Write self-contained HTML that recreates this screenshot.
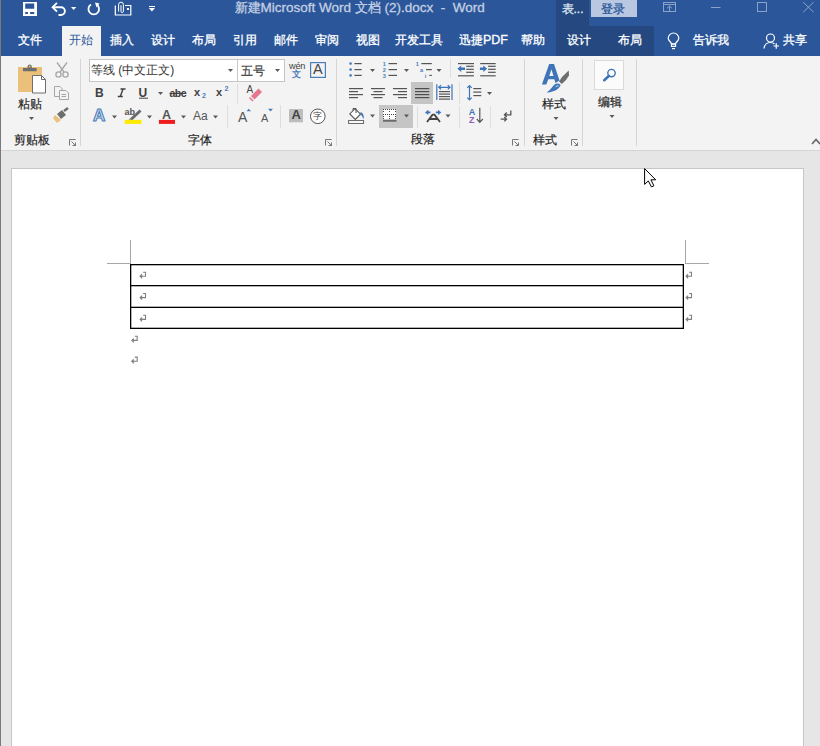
<!DOCTYPE html>
<html><head><meta charset="utf-8">
<style>
*{margin:0;padding:0;box-sizing:border-box}
html,body{width:820px;height:746px;overflow:hidden;background:#e6e6e6;font-family:"Liberation Sans",sans-serif;}
.a{position:absolute}
#title{left:0;top:0;width:820px;height:56px;background:#2b579a}
#lb{left:0;top:0;width:1px;height:746px;background:#7a7a7a;z-index:50}
.tt{color:#fff;font-size:12px;line-height:14px;white-space:nowrap;-webkit-text-stroke:0.3px currentColor}
#ribbon{left:0;top:56px;width:820px;height:94px;background:#f3f3f3}
#rbb{left:0;top:150px;width:820px;height:1px;background:#d5d5d5}
#page{left:11px;top:168px;width:793px;height:600px;background:#fff;border:1px solid #c6c6c6}
.sep{background:#d9d9d9;width:1px}
.lbl{color:#262626;font-size:12px;line-height:13px;white-space:nowrap;-webkit-text-stroke:0.2px currentColor}
.ret{color:#7f7f7f}
</style></head><body>
<div id="lb" class="a"></div>
<!-- TITLE BAR -->
<div id="title" class="a"></div>
<svg class="a" style="left:0;top:0" width="820" height="56" viewBox="0 0 820 56">
 <!-- save -->
 <path d="M23 2 H37 V16 H23 Z M25.2 3.5 V8.8 H34.2 V3.5 Z M25.2 12 V14 H27.9 V12 Z M30.1 12 V14 H34.2 V12 Z" fill="#fff" fill-rule="evenodd"/>
 <!-- undo -->
 <path d="M57 2.8 L52.6 7.2 L57 11.6" fill="none" stroke="#fff" stroke-width="1.9"/>
 <path d="M53 7.2 H61 A3.9 3.9 0 0 1 61 15 H58.5" fill="none" stroke="#fff" stroke-width="1.9"/>
 <path d="M71 7 H76.3 L73.65 9.9 Z" fill="#fff"/>
 <!-- repeat -->
 <path d="M91 4.5 A5.3 5.3 0 1 0 96.5 4.5" fill="none" stroke="#fff" stroke-width="1.8"/>
 <path d="M95 2.5 L99.5 3.5 L96.5 7.5 Z" fill="#fff"/>
 <!-- touch mode -->
 <path d="M115.3 5.5 V15 H130.8 V5.5 H125" fill="none" stroke="#fff" stroke-width="1.2"/>
 <path d="M118.6 11.5 V4.6 A2.4 2.4 0 0 1 123.4 4.6 V11.3 A1.2 1.2 0 0 1 121 11.3 V5.2" fill="none" stroke="#fff" stroke-width="1"/>
 <rect x="127" y="8" width="2" height="2" fill="#fff"/>
 <!-- customize -->
 <rect x="149" y="6" width="6" height="1" fill="#fff"/>
 <path d="M148.8 8 H155 L151.9 11.5 Z" fill="#fff"/>
 <!-- right window controls -->
 <rect x="556" y="0" width="33" height="26" fill="#24487f"/>
 <rect x="556" y="26" width="98" height="30" fill="#24487f"/>
 <rect x="591" y="0" width="46" height="17" fill="#b9c8e0"/>
 <g fill="none" stroke="#8aa3cb" stroke-width="1">
  <rect x="663.5" y="2.5" width="12" height="9"/>
  <path d="M663.5 4.5 H675.5 M667 8.3 L669.5 6 L672 8.3 M669.5 6.5 V11"/>
  <path d="M711 7.5 H720.5"/>
  <rect x="757.5" y="2.5" width="9" height="9"/>
  <path d="M803.2 2.2 L813.6 12.2 M813.6 2.2 L803.2 12.2"/>
 </g>
 <!-- lightbulb -->
 <g fill="none" stroke="#fff" stroke-width="1.2">
  <path d="M671.5 44 C671.2 42 668.2 40.6 668.2 38.3 A5.3 5.3 0 0 1 678.8 38.3 C678.8 40.6 675.8 42 675.5 44 Z"/>
  <rect x="671.5" y="44" width="4" height="2.4"/>
 </g>
 <rect x="672" y="48" width="3" height="1.2" fill="#fff"/>
 <!-- person -->
 <g fill="none" stroke="#fff" stroke-width="1.2">
  <circle cx="770.5" cy="38" r="4"/>
  <path d="M764 48.5 C764.5 44.5 767 42.5 770.5 42.5 C772 42.5 773.5 43 774.5 44"/>
  <path d="M773.5 46 H779 M776.25 43.2 V48.8"/>
 </g>
</svg>
<div class="a tt" style="left:234.5px;top:0px;color:#c3cfe3;font-size:12.5px;line-height:15px">新建<span style="font-size:13.5px">Microsoft Word </span>文档<span style="font-size:13.5px"> (2).docx &nbsp;- &nbsp;Word</span></div>
<div class="a tt" style="left:561.5px;top:1.5px;color:#dfe6f1;font-size:12px;line-height:15px">表...</div>
<div class="a tt" style="left:601px;top:1.5px;color:#2b579a;font-size:12px;line-height:15px">登录</div>
<!-- tabs -->
<div class="a" style="left:62px;top:26px;width:39px;height:30px;background:#f3f3f3"></div>
<div class="a tt" style="left:18px;top:33px">文件</div>
<div class="a tt" style="left:68.5px;top:33px;color:#2b579a;-webkit-text-stroke:0">开始</div>
<div class="a tt" style="left:110px;top:33px">插入</div>
<div class="a tt" style="left:151px;top:33px">设计</div>
<div class="a tt" style="left:191.5px;top:33px">布局</div>
<div class="a tt" style="left:232.5px;top:33px">引用</div>
<div class="a tt" style="left:274px;top:33px">邮件</div>
<div class="a tt" style="left:314.5px;top:33px">审阅</div>
<div class="a tt" style="left:355.5px;top:33px">视图</div>
<div class="a tt" style="left:395px;top:33px">开发工具</div>
<div class="a tt" style="left:459px;top:33px">迅捷<span style="font-size:12.5px">PDF</span></div>
<div class="a tt" style="left:521px;top:33px">帮助</div>
<div class="a tt" style="left:566.5px;top:33px">设计</div>
<div class="a tt" style="left:618px;top:33px">布局</div>
<div class="a tt" style="left:693px;top:33px">告诉我</div>
<div class="a tt" style="left:782.5px;top:33px">共享</div>

<!-- RIBBON -->
<div id="ribbon" class="a"></div>
<!-- combo boxes -->
<div class="a" style="left:89px;top:59px;width:149px;height:23px;background:#fff;border:1px solid #c6c6c6"></div>
<div class="a" style="left:237px;top:59px;width:48px;height:23px;background:#fff;border:1px solid #c6c6c6"></div>
<div class="a" style="left:594px;top:60px;width:30px;height:30px;background:#fbfbfb;border:1px solid #dadada"></div>
<!-- selected buttons -->
<div class="a" style="left:411px;top:82px;width:22px;height:22px;background:#c5c5c5"></div>
<div class="a" style="left:379px;top:105px;width:34px;height:23px;background:#c5c5c5"></div>
<svg class="a" style="left:0;top:56px" width="820" height="94" viewBox="0 56 820 94">
 <!-- separators -->
 <g fill="#d5d5d5">
  <rect x="80" y="59" width="1" height="87"/>
  <rect x="336" y="59" width="1" height="87"/>
  <rect x="524" y="59" width="1" height="87"/>
  <rect x="582" y="59" width="1" height="87"/>
  <rect x="636" y="59" width="1" height="87"/>
 </g>
 <g fill="#dedede">
  <rect x="237" y="84" width="1" height="20"/>
  <rect x="227" y="105" width="1" height="23"/>
  <rect x="280" y="105" width="1" height="23"/>
  <rect x="450" y="59" width="1" height="19"/>
  <rect x="459" y="82" width="1" height="22"/>
  <rect x="417" y="106" width="1" height="22"/>
  <rect x="459" y="106" width="1" height="22"/>
  <rect x="490" y="106" width="1" height="22"/>
 </g>
 <!-- dropdown arrows -->
 <g fill="#595959">
  <path d="M29 117 h5 l-2.5 3z"/>
  <path d="M158 92 h5 l-2.5 3z"/>
  <path d="M228 69 h5 l-2.5 3z"/>
  <path d="M275 69 h5 l-2.5 3z"/>
  <path d="M112 115.5 h5 l-2.5 3z"/>
  <path d="M147 115.5 h5 l-2.5 3z"/>
  <path d="M181 115.5 h5 l-2.5 3z"/>
  <path d="M213 115.5 h5 l-2.5 3z"/>
  <path d="M370 69 h5 l-2.5 3z"/>
  <path d="M404 69 h5 l-2.5 3z"/>
  <path d="M436.5 69 h5 l-2.5 3z"/>
  <path d="M487 92 h5 l-2.5 3z"/>
  <path d="M370 114.5 h5 l-2.5 3z"/>
  <path d="M404 114.5 h5 l-2.5 3z"/>
  <path d="M445.5 114.5 h5 l-2.5 3z"/>
  <path d="M553.5 117 h5 l-2.5 3z"/>
  <path d="M609.5 115 h5 l-2.5 3z"/>
 </g>
 <!-- launchers -->
 <g fill="none" stroke="#777" stroke-width="1">
  <path d="M69.5 145.5 V139.5 H75.5"/><path d="M71.5 141.5 L75.5 145.5 M75.5 142.5 V145.5 H72.5"/>
  <path d="M325.5 145.5 V139.5 H331.5"/><path d="M327.5 141.5 L331.5 145.5 M331.5 142.5 V145.5 H328.5"/>
  <path d="M512.5 145.5 V139.5 H518.5"/><path d="M514.5 141.5 L518.5 145.5 M518.5 142.5 V145.5 H515.5"/>
  <path d="M571.5 145.5 V139.5 H577.5"/><path d="M573.5 141.5 L577.5 145.5 M577.5 142.5 V145.5 H574.5"/>
 </g>
 <!-- collapse caret -->
 <path d="M812 144 L816 139.5 L820 144" fill="none" stroke="#666" stroke-width="1.6"/>

 <!-- paste -->
 <rect x="18" y="67" width="24" height="25" fill="#ebc07a"/>
 <path d="M23 71.2 V68 H27.6 V66.6 A2.1 2.1 0 0 1 31.8 66.6 V68 H36.6 V71.2 Z" fill="#6e6e6e"/><circle cx="29.7" cy="66.5" r="0.9" fill="#ebc07a"/>
 <path d="M32.5 75.5 H41.5 L45.5 79.5 V93 H32.5 Z" fill="#fff" stroke="#6e6e6e" stroke-width="1"/>
 <path d="M41.5 75.5 V79.5 H45.5" fill="none" stroke="#6e6e6e" stroke-width="1"/>
 <!-- scissors -->
 <g fill="none" stroke="#a6a6a6" stroke-width="1.3">
  <path d="M57 62.5 L64 72 M67 62.5 L60 72"/>
  <circle cx="58.5" cy="74.5" r="2.6"/><circle cx="65.5" cy="74.5" r="2.6"/>
 </g>
 <!-- copy -->
 <g fill="#f3f3f3" stroke="#a6a6a6" stroke-width="1">
  <path d="M54.5 86.5 H60 L62 88.5 V96.5 H54.5 Z"/>
  <path d="M59.5 90.5 H66 L68.5 93 V99.5 H59.5 Z"/>
 </g>
 <g stroke="#a6a6a6" stroke-width="1"><path d="M61.5 94.5 H66 M61.5 96.5 H66"/></g>
 <!-- format painter -->
 <path d="M57 114 L62 110 L66 115 L61 119 Z" fill="#6e6e6e"/>
 <path d="M64 111 L68 108" stroke="#6e6e6e" stroke-width="2.5"/>
 <path d="M55 115 L61 120 L57 123 L53 118 Z" fill="#ebc07a"/>
</svg>
<!-- FONT GROUP -->
<svg class="a" style="left:0;top:56px" width="820" height="94" viewBox="0 56 820 94">
 <path d="M120.5 89 H125.5 M123 89 L120.3 96.5 M117.8 96.5 H122.8" fill="none" stroke="#404040" stroke-width="1.4"/>
 <!-- underline bar -->
 <rect x="139" y="97.7" width="9" height="1" fill="#444"/>
 <!-- strikethrough -->
 <rect x="169.5" y="93" width="17" height="1" fill="#444"/>
 <!-- A border box -->
 <rect x="310.6" y="62.6" width="14.8" height="14.8" fill="none" stroke="#4a7ebb" stroke-width="1.2"/>
 <!-- clear formatting eraser -->
 <path d="M251 96 L258.5 88.5 L262 92 L254.5 99.5 Z" fill="#e8758f"/>
 <path d="M249.5 97.5 L253 101" stroke="#e8758f" stroke-width="1.6"/>
 <!-- highlight pen -->
 <path d="M130 118.5 L139.5 109.5 L141.5 111.5 L132 120.5 Z" fill="#6b6b6b"/>
 <path d="M128.5 120 L130 118.5 L132 120.5 L130.5 122 Z" fill="#8a8a8a"/>
 <rect x="124.7" y="119.9" width="16.8" height="4" fill="#ffea00"/>
 <!-- font color bar -->
 <rect x="158.9" y="119.9" width="16.1" height="4" fill="#ee1c1c"/>
 <!-- grow/shrink triangles -->
 <path d="M246.5 111.3 H251 L248.75 108.8 Z" fill="#4a7ebb"/>
 <path d="M268 108.8 H273 L270.5 111.5 Z" fill="#4a7ebb"/>
 <!-- shading box -->
 <rect x="289" y="109" width="14" height="13.3" fill="#bdbdbd"/>
 <!-- enclose circle -->
 <circle cx="317.8" cy="116.3" r="7.3" fill="#fff" stroke="#555" stroke-width="1"/>
 <!-- text effects A outline -->
 <text x="93" y="121.4" font-family="Liberation Sans" font-weight="bold" font-size="17" fill="#dce8f6" stroke="#4a7ebb" stroke-width="1.1">A</text>
</svg>
<div class="a" style="left:95px;top:85.5px;font:bold 12px/14px 'Liberation Sans';color:#404040">B</div>

<div class="a" style="left:138.5px;top:85.5px;font:bold 12px/14px 'Liberation Sans';color:#404040">U</div>
<div class="a" style="left:169.5px;top:86.5px;font:bold 10.5px/12px 'Liberation Sans';color:#404040;letter-spacing:-0.5px">abc</div>
<div class="a" style="left:194px;top:85px;font:bold 11px/14px 'Liberation Sans';color:#404040">x</div>
<div class="a" style="left:202px;top:92px;font:bold 7px/8px 'Liberation Sans';color:#4a7ebb">2</div>
<div class="a" style="left:216px;top:85px;font:bold 11px/14px 'Liberation Sans';color:#404040">x</div>
<div class="a" style="left:224.5px;top:85px;font:bold 7px/8px 'Liberation Sans';color:#4a7ebb">2</div>
<div class="a" style="left:246.5px;top:84px;font:10px/12px 'Liberation Sans';color:#444">A</div>
<div class="a" style="left:289px;top:61px;font:9.2px/10px 'Liberation Sans';color:#404040;letter-spacing:-0.2px">wén</div>
<div class="a" style="left:292px;top:69px;font:bold 8.5px/10px 'Liberation Sans',sans-serif;color:#4a7ebb">文</div>
<div class="a" style="left:313px;top:61px;font:14.5px/16px 'Liberation Sans';color:#444">A</div>
<div class="a" style="left:124.5px;top:107px;font:bold 9px/10px 'Liberation Sans';color:#555">ab</div>
<div class="a" style="left:162px;top:107.5px;font:bold 12.5px/14px 'Liberation Sans';color:#555">A</div>
<div class="a" style="left:193px;top:108.5px;font:12px/14px 'Liberation Sans';color:#555">Aa</div>
<div class="a" style="left:238px;top:109px;font:14px/16px 'Liberation Sans';color:#555">A</div>
<div class="a" style="left:261px;top:112px;font:11px/13px 'Liberation Sans';color:#555">A</div>
<div class="a" style="left:291.5px;top:107px;font:bold 13px/15px 'Liberation Sans';color:#444">A</div>
<div class="a" style="left:313.3px;top:110.5px;font:9px/11px 'Liberation Sans',sans-serif;color:#444">字</div>

<!-- PARAGRAPH GROUP -->
<svg class="a" style="left:0;top:56px" width="820" height="94" viewBox="0 56 820 94">
 <!-- bullets -->
 <g fill="#4a7ebb"><circle cx="350.6" cy="63.6" r="1.3"/><circle cx="350.6" cy="69.6" r="1.3"/><circle cx="350.6" cy="75.4" r="1.3"/></g>
 <g fill="#555"><rect x="354.4" y="63" width="7.3" height="1.2"/><rect x="354.4" y="69" width="7.3" height="1.2"/><rect x="354.4" y="74.8" width="7.3" height="1.2"/></g>
 <!-- numbering -->
 <g font-family="Liberation Sans" font-weight="bold" font-size="5.6" fill="#4a7ebb"><text x="382.8" y="66">1</text><text x="382.8" y="72">2</text><text x="382.8" y="77.8">3</text></g>
 <g fill="#555"><rect x="388.5" y="63" width="8.5" height="1.2"/><rect x="388.5" y="69" width="8.5" height="1.2"/><rect x="388.5" y="74.8" width="8.5" height="1.2"/></g>
 <!-- multilevel -->
 <g font-family="Liberation Sans" font-weight="bold" font-size="5.6" fill="#4a7ebb"><text x="415.8" y="66">1</text><text x="420" y="72">a</text><text x="424.8" y="77.8">i</text></g>
 <g fill="#555"><rect x="421.4" y="63" width="10.4" height="1.2"/><rect x="426" y="69" width="5.8" height="1.2"/><rect x="429.4" y="74.8" width="2.4" height="1.2"/></g>
 <!-- indents -->
 <g fill="#555">
  <rect x="458" y="63" width="16" height="1.2"/><rect x="466.2" y="65.7" width="7.6" height="1.2"/><rect x="466.2" y="68.7" width="7.6" height="1.2"/><rect x="466.2" y="71.7" width="7.6" height="1.2"/><rect x="458" y="75.2" width="16" height="1.2"/>
  <rect x="480.2" y="63" width="15.5" height="1.2"/><rect x="488.1" y="65.7" width="7.6" height="1.2"/><rect x="488.1" y="68.7" width="7.6" height="1.2"/><rect x="488.1" y="71.7" width="7.6" height="1.2"/><rect x="480.2" y="75.2" width="15.5" height="1.2"/>
 </g>
 <g fill="#3f74b8">
  <path d="M457.4 68.8 L461.2 65.6 V67.6 H465 V70 H461.2 V72 Z"/>
  <path d="M487.1 68.8 L483.3 65.6 V67.6 H479.9 V70 H483.3 V72 Z"/>
 </g>
 <!-- align -->
 <g fill="#555">
  <rect x="349" y="88" width="14" height="1.2"/><rect x="349" y="91" width="9" height="1.2"/><rect x="349" y="94" width="14" height="1.2"/><rect x="349" y="97" width="9" height="1.2"/>
  <rect x="371" y="88" width="14" height="1.2"/><rect x="373.5" y="91" width="9" height="1.2"/><rect x="371" y="94" width="14" height="1.2"/><rect x="373.5" y="97" width="9" height="1.2"/>
  <rect x="393" y="88" width="14" height="1.2"/><rect x="398" y="91" width="9" height="1.2"/><rect x="393" y="94" width="14" height="1.2"/><rect x="398" y="97" width="9" height="1.2"/>
 </g>
 <g fill="#4d4d4d">
  <rect x="415" y="88" width="14.3" height="1.2"/><rect x="415" y="91" width="14.3" height="1.2"/><rect x="415" y="94" width="14.3" height="1.2"/><rect x="415" y="97" width="14.3" height="1.2"/>
 </g>
 <!-- distributed -->
 <g fill="#555"><rect x="439" y="91" width="11" height="1.2"/><rect x="439" y="93.5" width="11" height="1.2"/><rect x="439" y="96" width="11" height="1.2"/><rect x="439" y="98.5" width="11" height="1.2"/></g>
 <g fill="none" stroke="#3f74b8" stroke-width="1.2">
  <path d="M436.8 84.3 V100 M452 84.3 V100 M438.8 87.3 H450"/>
  <path d="M441 85.2 L438.8 87.3 L441 89.4 M447.8 85.2 L450 87.3 L447.8 89.4"/>
 </g>
 <!-- line spacing -->
 <g fill="none" stroke="#3f74b8" stroke-width="1.2">
  <path d="M469.5 85.5 V100 M467.3 87.8 L469.5 85.5 L471.7 87.8 M467.3 97.7 L469.5 100 L471.7 97.7"/>
 </g>
 <g fill="#555"><rect x="473.3" y="88" width="8" height="1.2"/><rect x="473.3" y="91.5" width="8" height="1.2"/><rect x="473.3" y="95" width="8" height="1.2"/></g>
 <!-- shading -->
 <path d="M355 108.7 L360.5 114.2 L355.3 119.4 L349.8 113.9 Z" fill="#fff" stroke="#555" stroke-width="1.1"/>
 <path d="M353 110.5 V108.5 H356 V113" fill="none" stroke="#555" stroke-width="1"/>
 <path d="M360.3 112 C363 112.5 364 115 363.8 119.3 L360.8 114.2 Z" fill="#3f74b8"/>
 <rect x="348.6" y="120.6" width="15" height="2.8" fill="#fff" stroke="#555" stroke-width="0.9"/>
 <!-- borders -->
 <rect x="383" y="109" width="13" height="10" fill="#fff"/>
 <g fill="#444">
  <rect x="383" y="109" width="1" height="1"/><rect x="385" y="109" width="1" height="1"/><rect x="387" y="109" width="1" height="1"/><rect x="389" y="109" width="1" height="1"/><rect x="391" y="109" width="1" height="1"/><rect x="393" y="109" width="1" height="1"/><rect x="395" y="109" width="1" height="1"/>
  <rect x="383" y="114" width="1" height="1"/><rect x="385" y="114" width="1" height="1"/><rect x="387" y="114" width="1" height="1"/><rect x="389" y="114" width="1" height="1"/><rect x="391" y="114" width="1" height="1"/><rect x="393" y="114" width="1" height="1"/><rect x="395" y="114" width="1" height="1"/>
  <rect x="383" y="111" width="1" height="1"/><rect x="383" y="116" width="1" height="1"/><rect x="383" y="118" width="1" height="1"/>
  <rect x="389" y="111" width="1" height="1"/><rect x="389" y="116" width="1" height="1"/><rect x="389" y="118" width="1" height="1"/>
  <rect x="395" y="111" width="1" height="1"/><rect x="395" y="116" width="1" height="1"/><rect x="395" y="118" width="1" height="1"/>
  <rect x="383" y="120.3" width="13.5" height="1.2"/>
 </g>
 <!-- chinese layout -->
 <g fill="#3f74b8">
  <path d="M425 112.4 L428.3 109.8 V111.6 H430.5 V113.2 H428.3 V115 Z"/>
  <path d="M441.3 112.4 L438 109.8 V111.6 H435.8 V113.2 H438 V115 Z"/>
 </g>
 <path d="M427 122 L432.6 114.6 H434.4 L440 122 M429.8 119 H437.2" fill="none" stroke="#444" stroke-width="1.8" stroke-linejoin="round"/>
 <!-- sort -->
 <text x="468.8" y="114.6" font-family="Liberation Sans" font-weight="bold" font-size="9" fill="#3f74b8">A</text>
 <text x="469" y="122.7" font-family="Liberation Sans" font-weight="bold" font-size="9" fill="#8e5fb8">Z</text>
 <path d="M479.8 107.7 V122 M476.8 119 L479.8 122.3 L482.8 119" fill="none" stroke="#555" stroke-width="1.2"/>
 <!-- show/hide -->
 <path d="M510.8 110.5 V114.8 H504.5 M506.8 112.5 L504.5 114.8 L506.8 117" fill="none" stroke="#555" stroke-width="1.3"/>
 <path d="M500.7 119.2 H506.5 M504.3 117 L506.5 119.2 L504.3 121.4" fill="none" stroke="#555" stroke-width="1.3"/>
</svg>

<!-- STYLES / EDITING -->
<svg class="a" style="left:0;top:56px" width="820" height="94" viewBox="0 56 820 94">
 <path d="M541.9 84.6 L549.2 63.9 H554 L559.5 80.5 L555.5 83 L554.3 79.3 H548.3 L546.3 84.6 Z M549.3 76 H553.5 L551.4 69.2 Z" fill="#3f74b8" fill-rule="evenodd"/>
 <path d="M568.7 70.5 L562 77 L559 81.5 L561.8 84 L566 80 L569 75.5 Z" fill="#6e6e6e"/>
 <path d="M560.2 84.6 C558.5 82.8 555.5 83.2 553.8 85.2 C551.5 88 549.5 90.5 546.5 92.6 C551.5 92.3 555.5 91 558.2 88.5 C560 86.8 561 85.6 560.2 84.6 Z" fill="#3f74b8"/>
 <path d="M555.5 87.2 C556.5 85.8 557.8 85.5 558.6 86" fill="none" stroke="#dbe6f3" stroke-width="1"/>
 <circle cx="611.5" cy="73.1" r="3.7" fill="none" stroke="#3f74b8" stroke-width="1.4"/>
 <path d="M608.8 76 L604.2 80.2" stroke="#3f74b8" stroke-width="2.6" stroke-linecap="round"/>
</svg>

<!-- labels clipboard -->
<div class="a lbl" style="left:17.5px;top:97.5px;font-size:12px">粘贴</div>
<div class="a lbl" style="left:14px;top:133.5px;font-size:12px">剪贴板</div>
<div class="a lbl" style="left:187.5px;top:133.5px;font-size:12px">字体</div>
<div class="a lbl" style="left:410.5px;top:133px;font-size:12px">段落</div>
<div class="a lbl" style="left:532.5px;top:133.5px;font-size:12px">样式</div>
<div class="a lbl" style="left:542px;top:97.5px;font-size:12px">样式</div>
<div class="a lbl" style="left:598px;top:96px;font-size:12px">编辑</div>
<div class="a lbl" style="left:91px;top:64px;font-size:12px;-webkit-text-stroke:0;color:#333">等线 (中文正文)</div>
<div class="a lbl" style="left:240.5px;top:64.5px;font-size:12px;-webkit-text-stroke:0.1px;color:#333">五号</div>

<div id="rbb" class="a"></div>
<!-- DOCUMENT -->
<div id="page" class="a"></div>
<svg class="a" style="left:0;top:151px" width="820" height="595" viewBox="0 151 820 595">
 <g fill="#a6a6a6">
  <rect x="130" y="240" width="1" height="24"/>
  <rect x="107" y="263" width="24" height="1"/>
  <rect x="685" y="240" width="1" height="24"/>
  <rect x="685" y="263" width="24" height="1"/>
 </g>
 <g fill="#000">
  <rect x="130" y="264" width="554" height="1.3"/>
  <rect x="130" y="285" width="554" height="1.3"/>
  <rect x="130" y="306.7" width="554" height="1.3"/>
  <rect x="130" y="327.7" width="554" height="1.3"/>
  <rect x="130" y="264" width="1.3" height="65"/>
  <rect x="682.7" y="264" width="1.3" height="65"/>
 </g>
 <defs><g id="rt"><path d="M3.8 0.5 H6.2 V4.6 H1" fill="none" stroke="#808080" stroke-width="1.1"/><path d="M0 4.6 L2.8 1.9 V7.3 Z" fill="#808080"/></g></defs>
 <use href="#rt" x="139.3" y="271.7"/>
 <use href="#rt" x="139.3" y="293"/>
 <use href="#rt" x="139.3" y="314.8"/>
 <use href="#rt" x="685.3" y="271.7"/>
 <use href="#rt" x="685.3" y="293"/>
 <use href="#rt" x="685.3" y="314.8"/>
 <use href="#rt" x="131" y="335.8"/>
 <use href="#rt" x="131" y="356.6"/>
</svg>

<svg class="a" style="left:630px;top:160px;z-index:60" width="40" height="40" viewBox="630 160 40 40"><path d="M644.6 168.6 V184.4 L648.3 180.9 L651.4 186.9 L653.9 185.8 L650.9 179.8 H655.7 Z" fill="#fff" stroke="#000" stroke-width="1" stroke-linejoin="round"/></svg>
</body></html>
